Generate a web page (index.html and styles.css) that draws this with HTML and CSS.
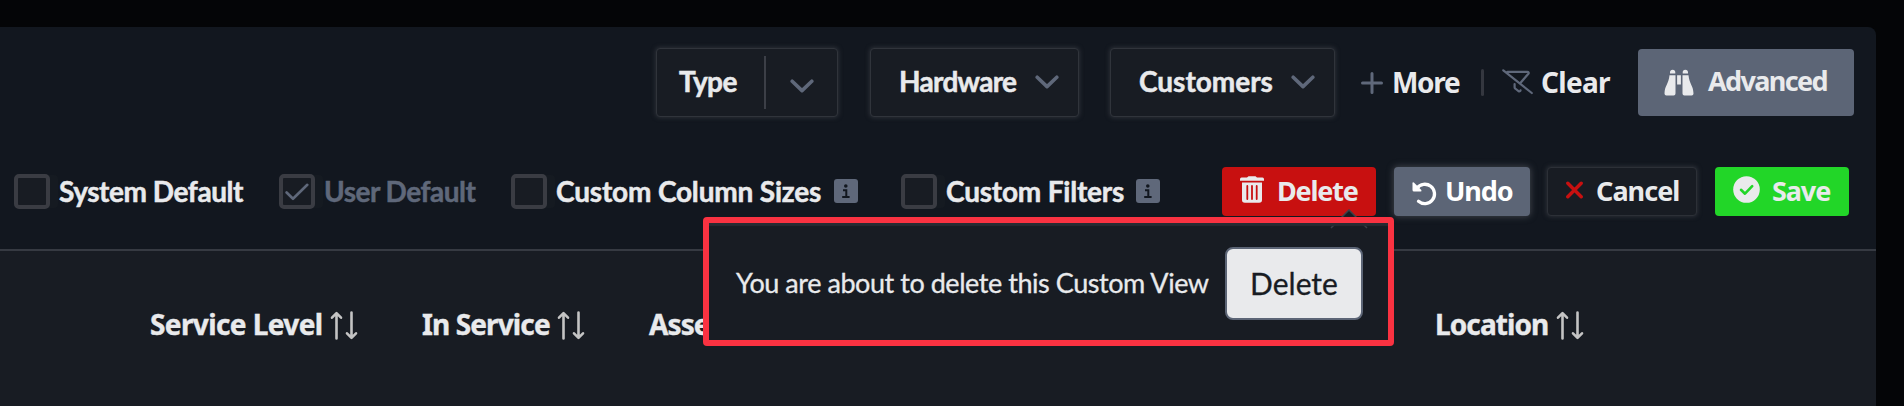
FILE: index.html
```html
<!DOCTYPE html>
<html lang="en">
<head>
<meta charset="utf-8">
<title>Custom View</title>
<link rel="stylesheet" href="styles.css">
</head>
<body>
<svg class="defs" width="0" height="0">
  <symbol id="chevron" viewBox="0 0 24 14"><path d="M2.2 2.2 12 11.6 21.8 2.2" fill="none" stroke="currentColor" stroke-width="3.6" stroke-linecap="round" stroke-linejoin="round"/></symbol>
  <symbol id="info" viewBox="0 0 24 24"><rect width="24" height="24" rx="3" fill="#5f687a"/><circle cx="11.8" cy="7" r="1.8" fill="#12171f"/><path d="M9 11.3h3.3v7M8.2 18h7.4" fill="none" stroke="#12171f" stroke-width="2"/></symbol>
  <symbol id="sort" viewBox="0 0 28 28"><path d="M6.5 27V2M2 6.2 6.5 1.6 11 6.2M21.5 1v25M17 21.8l4.5 4.6 4.5-4.6" fill="none" stroke="#c4c4c4" stroke-width="2.6" stroke-linecap="round" stroke-linejoin="round"/></symbol>
</svg>
<main class="panel">
  <div class="filters">
    <div class="select type"><span>Type</span><i class="split"></i><svg class="chev"><use href="#chevron"/></svg></div>
    <div class="select hardware"><span>Hardware</span><svg class="chev"><use href="#chevron"/></svg></div>
    <div class="select customers"><span>Customers</span><svg class="chev"><use href="#chevron"/></svg></div>
    <a class="link more"><svg width="22" height="22" viewBox="0 0 22 22"><path d="M11 1.5v19M1.5 11h19" stroke="#5f687a" stroke-width="3" stroke-linecap="round"/></svg><span>More</span></a>
    <i class="pipe"></i>
    <a class="link clear"><svg width="31" height="26" viewBox="0 0 31 26"><path d="M1.3 1.3 29.8 24M5.5 2.8h20c1 0 1.6 1 .9 1.9L18.8 13.500M12.600 15v3.300c0 .5.2.9.6 1.200l3.300 2.600c.8.6 1.800.2 2-.7" fill="none" stroke="#5f687a" stroke-width="2.200" stroke-linecap="round" stroke-linejoin="round"/></svg><span>Clear</span></a>
    <button class="advanced"><svg width="30" height="27" viewBox="0 0 30 27" fill="#e9eaec"><path d="M6 3.600C6 1.500 7 .7 8.700.7s2.600.8 2.600 2.900V4.500H6zM18.700 3.600c0-2.100.9-2.900 2.600-2.900S24 1.500 24 3.600V4.500h-5.300zM5.500 6.300h6v18.300q0 1.900-1.900 1.900H2.400Q.5 26.500.5 24.600C.8 16 4.600 15.500 5.500 6.300zM24.500 6.300h-6v18.300q0 1.900 1.900 1.900h7.200q1.900 0 1.900-1.900C29.200 16 25.400 15.500 24.500 6.300zM13.100 6.300h3.800v9.200h-3.800z"/></svg><span>Advanced</span></button>
  </div>
  <div class="options">
    <label class="check c1"><i class="box"></i><span>System Default</span></label>
    <label class="check c2 muted"><i class="box"><svg width="24" height="18" viewBox="0 0 24 18"><path d="M1.600 9.500 8 15.800 22.300 1.800" fill="none" stroke="#5f687a" stroke-width="2.600" stroke-linecap="round" stroke-linejoin="round"/></svg></i><span>User Default</span></label>
    <label class="check c3"><i class="box"></i><span>Custom Column Sizes</span><svg class="info"><use href="#info"/></svg></label>
    <label class="check c4"><i class="box"></i><span>Custom Filters</span><svg class="info"><use href="#info"/></svg></label>
    <button class="btn delete"><svg width="24" height="27" viewBox="0 0 24 27"><path d="M0 3.200Q0 1.600 1.500 1.600H7L8.500.2h7L17 1.600h5.500Q24 1.600 24 3.200V4.700H0zM2 6.500h20V24q0 2.800-2.800 2.800H4.800Q2 26.800 2 24z" fill="#e9eaec"/><path d="M7.300 10v13M12 10v13M16.700 10v13" stroke="#c81010" stroke-width="1.800" stroke-linecap="round"/></svg><span>Delete</span></button>
    <button class="btn undo"><svg width="25" height="25" viewBox="0 0 25 25"><path d="M5 7.200A9.700 9.700 0 1 1 6.500 20.300" fill="none" stroke="#fff" stroke-width="3.300" stroke-linecap="round"/><path d="M.5 2.200Q.5.500 1.900 1.600L9.300 8.900Q10 10.500 8.500 10.500H2Q.5 10.500.5 9z" fill="#fff"/></svg><span>Undo</span></button>
    <button class="btn cancel"><svg width="17" height="18" viewBox="0 0 17 18"><path d="M1.800 2.200 15.200 15.800M15.200 2.200 1.800 15.800" stroke="#c81010" stroke-width="3.400" stroke-linecap="round"/></svg><span>Cancel</span></button>
    <button class="btn save"><svg width="27" height="27" viewBox="0 0 27 27"><circle cx="13.500" cy="13.500" r="13.300" fill="#e9eaec"/><path d="M8 13.800 12 17.700 19.200 10.200" fill="none" stroke="#22d628" stroke-width="2.600" stroke-linecap="round" stroke-linejoin="round"/></svg><span>Save</span></button>
  </div>
  <div class="thead">
    <div class="th service-level"><span>Service Level</span><svg class="sort"><use href="#sort"/></svg></div>
    <div class="th in-service"><span>In Service</span><svg class="sort"><use href="#sort"/></svg></div>
    <div class="th asset"><span>Asse</span></div>
    <div class="th location"><span>Location</span><svg class="sort"><use href="#sort"/></svg></div>
  </div>
</main>
<div class="popover">
  <svg class="caret" width="38" height="20" viewBox="0 0 38 20"><path d="M1 19 19 1 37 19z" fill="#181c23"/><path d="M1 19 19 1 37 19" fill="none" stroke="#3c4048" stroke-width="1.500"/></svg>
  <span class="message">You are about to delete this Custom View</span>
  <button class="confirm">Delete</button>
  <div class="outline"></div>
</div>
</body>
</html>
```

FILE: styles.css
```css
* { box-sizing: border-box; }
body {
  margin: 0;
  width: 1904px;
  height: 406px;
  padding-top: 27px;
  overflow: hidden;
  background: #040507;
  color: #e9eaec;
  font: 700 28px/34px Lato, sans-serif;
  white-space: nowrap;
}
.defs { position: absolute; }
svg { display: block; flex: none; }
button { border: 0; margin: 0; padding: 0; color: inherit; font: inherit; }
.panel {
  width: 1876px;
  height: 379px;
  background: #12171f;
  border-top-right-radius: 8px;
}

.filters { display: flex; height: 112px; padding: 21px 0 0 656px; align-items: flex-start; }
.select {
  display: flex;
  align-items: center;
  flex: none;
  height: 69px;
  border: 1px solid #30343b;
  border-radius: 4px;
  background: #181c23;
  box-shadow: 0 0 4px 1px #2b2f36;
}
.select span { margin-top: -4px; }
.select span, .check span { -webkit-text-stroke: .5px currentColor; }
.chev { width: 24px; height: 14px; color: #5f687a; }
.type { width: 182px; padding-left: 22px; }
.type span { width: 85px; letter-spacing: -.54px; }
.type .chev { margin: 6px 0 0 24px; }
.split { width: 2px; height: 53px; background: #3c3f47; }
.hardware { width: 209px; margin-left: 32px; padding-left: 28px; }
.hardware span { width: 136px; letter-spacing: -.7px; }
.hardware .chev, .customers .chev { margin-top: -2px; }
.customers { width: 225px; margin-left: 31px; padding-left: 28px; }
.customers span { width: 152px; }
.link { display: flex; height: 69px; align-items: center; font: 700 28px/34px "Noto Sans", sans-serif; }
.link span { margin-top: -1px; }
.more { width: 120px; margin-left: 26px; }
.more span { margin-left: 9px; letter-spacing: -1.29px; }
.pipe { width: 3px; height: 27px; margin-top: 21px; border-radius: 2px; background: #34373f; }
.clear { width: 136px; margin-left: 18px; }
.clear svg { margin-top: -2px; }
.clear span { margin-left: 8px; letter-spacing: -.7px; }
.advanced {
  display: flex;
  align-items: center;
  flex: none;
  width: 216px;
  height: 67px;
  margin: 1px 0 0;
  padding-left: 26px;
  border-radius: 4px;
  background: #5c6576;
  font: 700 27px/34px "Noto Sans", sans-serif;
  letter-spacing: -1.65px;
}
.advanced span { margin: -4px 0 0 14px; }

.options { display: flex; height: 112px; padding: 28px 0 0 14px; align-items: flex-start; border-bottom: 2px solid #363a42; }
.check { display: flex; align-items: center; flex: none; height: 35px; margin-top: 7px; }
.check span { margin-top: -1px; }
.box {
  display: flex;
  align-items: center;
  justify-content: center;
  width: 36px;
  height: 35px;
  margin-right: 9px;
  border: 4px solid #3a3c43;
  border-radius: 5px;
  background: #181c23;
  box-shadow: 9px 0 0 -1px #151a21;
}
.c1 { width: 265px; letter-spacing: -.44px; }
.c2 { width: 232px; letter-spacing: -.5px; }
.c3 { width: 390px; letter-spacing: -.17px; }
.c4 { width: 321px; letter-spacing: -.2px; }
.c3 span { width: 278px; }
.c4 span { width: 190px; }
.muted { color: #5f687a; }
.info { width: 24px; height: 24px; margin-top: -1px; }
.btn {
  display: flex;
  align-items: center;
  flex: none;
  height: 49px;
  border-radius: 4px;
  font: 700 27px/34px "Noto Sans", sans-serif;
}
.btn span { margin-top: -1px; }
.delete { width: 154px; padding-left: 18px; background: #c81010; letter-spacing: -1.2px; }
.delete svg { margin: -4px 13px 0 0; }
.undo { width: 136px; margin-left: 18px; padding-left: 18px; background: #5c6576; color: #fff; letter-spacing: -1.1px; box-shadow: 0 0 6px 1px #3c4048; }
.undo svg { margin: 3px 8px 0 0; }
.cancel { width: 150px; margin-left: 17px; padding-left: 18px; border: 1px solid #2c3037; background: #181c23; letter-spacing: -.95px; box-shadow: 0 0 4px 1px #2b2f36; }
.cancel svg { margin: -3px 13px 0 0; }
.save { width: 134px; margin-left: 18px; padding-left: 18px; background: #22d628; letter-spacing: -1.1px; }
.save svg { margin: -4px 12px 0 0; }

.thead { display: flex; height: 155px; padding: 57px 0 0 150px; background: #181c23; font: 700 28px/34px "Noto Sans", sans-serif; }
.th { display: flex; align-items: center; flex: none; height: 34px; }
.th span { margin-top: -2px; -webkit-text-stroke: .4px currentColor; }
.sort { width: 28px; height: 29px; }
.service-level { width: 272px; letter-spacing: -.6px; }
.service-level span { width: 180px; }
.in-service { width: 227px; letter-spacing: -.88px; }
.in-service span { width: 135px; }
.asset { width: 786px; letter-spacing: -.9px; }
.location span { width: 121px; letter-spacing: -.9px; }

/* Confirmation popover floats over the toolbar and the table head */
.popover {
  position: absolute;
  left: 703px;
  top: 217px;
  display: flex;
  align-items: center;
  width: 691px;
  height: 129px;
  padding-left: 33px;
  background: #181c23;
  border-radius: 4px;
}
.outline {
  position: absolute;
  inset: 0;
  border: 6px solid #fa3241;
  border-radius: 4px;
  box-shadow: inset 0 3px 1px #272b32;
}
.caret { position: absolute; left: 627px; top: -8px; }
.message { width: 489px; margin-top: 3px; font-size: 27px; font-weight: 400; letter-spacing: -.45px; -webkit-text-stroke: .3px currentColor; }
.confirm {
  width: 138px;
  height: 73px;
  margin-top: 4px;
  padding-bottom: 1px;
  border: 2px solid #5c6576;
  border-radius: 8px;
  background: #e9eaec;
  color: #181c23;
  font-size: 30px;
  font-weight: 400;
  -webkit-text-stroke: .3px currentColor;
}
```
